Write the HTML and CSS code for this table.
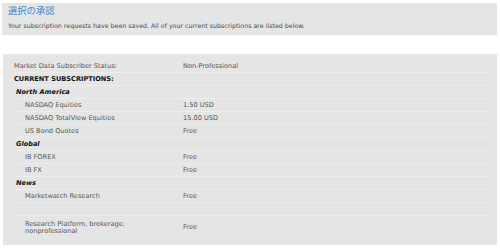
FILE: index.html
```html
<!DOCTYPE html>
<html>
<head>
<meta charset="utf-8">
<link rel="stylesheet" href="styles.css">
</head>
<body>
<div class="page">
  <div class="notice">
    <h1 class="title">選択の承認</h1>
    <p class="msg">Your subscription requests have been saved. All of your current subscriptions are listed below.</p>
  </div>
  <div class="panel">
    <div class="row"><span class="lbl">Market Data Subscriber Status:</span><span class="val">Non-Professional</span></div>
    <div class="row head"><span class="lbl">CURRENT SUBSCRIPTIONS:</span></div>
    <div class="row region"><span class="lbl">North America</span></div>
    <div class="row item"><span class="lbl">NASDAQ Equities</span><span class="val">1.50 USD</span></div>
    <div class="row item"><span class="lbl">NASDAQ TotalView Equities</span><span class="val">15.00 USD</span></div>
    <div class="row item"><span class="lbl">US Bond Quotes</span><span class="val">Free</span></div>
    <div class="row region"><span class="lbl">Global</span></div>
    <div class="row item"><span class="lbl">IB FOREX</span><span class="val">Free</span></div>
    <div class="row item"><span class="lbl">IB FX</span><span class="val">Free</span></div>
    <div class="row region"><span class="lbl">News</span></div>
    <div class="row item"><span class="lbl">Marketwatch Research</span><span class="val">Free</span></div>
    <div class="row empty"></div>
    <div class="row item tall"><span class="lbl">Research Platform, brokerage,<br>nonprofessional</span><span class="val">Free</span></div>
  </div>
</div>
</body>
</html>
```
FILE: styles.css
```css
html, body {
  margin: 0;
  padding: 0;
  background: #ffffff;
}
.page {
  padding: 3px 3px 0 2px;
  font-family: "DejaVu Sans", Verdana, sans-serif;
  color: #555555;
}
.notice {
  background: #e5e5e5;
  padding: 2px 6px 5px 6px;
  height: 25px;
}
.title {
  margin: 0;
  font-family: "Noto Sans CJK JP", sans-serif;
  font-weight: normal;
  font-size: 9.3px;
  line-height: 11px;
  color: #4388cc;
}
.msg {
  margin: 6px 0 0 0;
  font-size: 6.3px;
  line-height: 8px;
  color: #4a4a4a;
}
.panel {
  margin-top: 19px;
  margin-left: 1px;
  background: #e5e5e5;
  padding: 6px 5px 6px 11px;
}
.row {
  display: flex;
  align-items: center;
  height: 12px;
  border-bottom: 1px solid #ededed;
  font-size: 6.6px;
  color: #555555;
}
.row .lbl {
  width: 169px;
  flex: none;
}
.row .val {
  flex: 1;
}
.head .lbl {
  font-weight: bold;
  color: #111111;
}
.region .lbl {
  font-weight: bold;
  font-style: italic;
  color: #111111;
  padding-left: 2px;
  width: 167px;
}
.item .lbl {
  padding-left: 11px;
  width: 158px;
}
.empty {
  height: 12px;
}
.tall {
  height: 23px;
  line-height: 7px;
  border-bottom: none;
}
```
